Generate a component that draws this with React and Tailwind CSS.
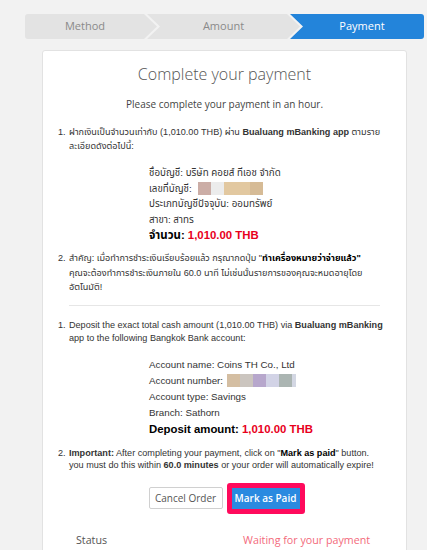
import React from "react";

const os = { fontFamily: '"Open Sans", "Noto Sans", sans-serif' };
const ar = { fontFamily: '"Liberation Sans", Arial, "Noto Sans Thai", sans-serif' };

function Blocks({ colors }) {
  return (
    <span className="inline-flex align-middle h-[13px]">
      {colors.map((c, i) => (
        <span key={i} className="inline-block h-[13px]" style={{ background: c[0], width: c[1] }} />
      ))}
    </span>
  );
}

export default function App() {
  return (
    <div className="min-h-[550px] bg-[#f2f2f2] pt-[14px]">
      {/* stepper */}
      <div className="ml-[25px] mr-[3px] flex h-[25px] rounded-[3px] overflow-hidden text-[11px]" style={os}>
        <div className="w-[132px] shrink-0 bg-[#e3e3e3] text-[#8a8a8a] flex items-center pr-[12px] [clip-path:polygon(0_0,119px_0,132px_50%,119px_100%,0_100%)]">
          <span className="flex-1 text-center">Method</span>
        </div>
        <div className="w-[153px] shrink-0 -ml-[10px] bg-[#e3e3e3] text-[#8a8a8a] flex items-center [clip-path:polygon(0_0,140px_0,153px_50%,140px_100%,0_100%,13px_50%)]">
          <span className="flex-1 text-center">Amount</span>
        </div>
        <div className="flex-1 -ml-[10px] bg-[#2384da] text-white flex items-center pl-[10px] [clip-path:polygon(0_0,100%_0,100%_100%,0_100%,13px_50%)]">
          <span className="flex-1 text-center">Payment</span>
        </div>
      </div>

      {/* card */}
      <div className="ml-[42px] mr-[20px] mt-[11px] bg-white border border-[#e2e2e2] rounded-[3px] min-h-[520px] pb-[20px]">
        <div className="pt-[10px] text-center text-[16px] leading-[26px] font-light text-[#555]" style={os}>
          Complete your payment
        </div>
        <div className="mt-[10px] text-center text-[10px] leading-[14px] text-[#444]" style={os}>
          Please complete your payment in an hour.
        </div>

        <div className="px-[26px] text-[9.1px] text-[#333]" style={ar}>
          {/* Thai section */}
          <div className="mt-[14px] flex leading-[14px]">
            <span className="w-[11px] -ml-[11px] shrink-0">1.</span>
            <span className="whitespace-nowrap">
              ฝากเงินเป็นจำนวนเท่ากับ (1,010.00 THB) ผ่าน <b>Bualuang mBanking app</b> ตามราย
              <br />
              ละเอียดดังต่อไปนี้:
            </span>
          </div>
          <div className="mt-[12px] pl-[80px] leading-[15.5px] text-[9.8px]">
            <div>ชื่อบัญชี: บริษัท คอยส์ ทีเอช จำกัด</div>
            <div className="flex items-center gap-[6px]">
              <span>เลขที่บัญชี:</span>
              <Blocks colors={[["#cbada6", "13px"], ["#ececec", "13px"], ["#e2c8a0", "26px"], ["#d6bb96", "13px"]]} />
            </div>
            <div>ประเภทบัญชีปัจจุบัน: ออมทรัพย์</div>
            <div>สาขา: สาทร</div>
            <div className="text-[11.4px] font-bold leading-[16px] text-black">
              จำนวน: <span className="text-[#e8001c]">1,010.00 THB</span>
            </div>
          </div>
          <div className="mt-[8px] flex leading-[14.5px]">
            <span className="w-[11px] -ml-[11px] shrink-0">2.</span>
            <span className="whitespace-nowrap">
              สำคัญ: เมื่อทำการชำระเงินเรียบร้อยแล้ว กรุณากดปุ่ม "<b className="text-black">ทำเครื่องหมายว่าจ่ายแล้ว"</b>
              <br />
              คุณจะต้องทำการชำระเงินภายใน 60.0 นาที ไม่เช่นนั้นรายการของคุณจะหมดอายุโดย
              <br />
              อัตโนมัติ!
            </span>
          </div>

          <div className="mt-[10px] border-t border-[#e6e6e6]" />

          {/* English section */}
          <div className="mt-[13px] flex leading-[13px]">
            <span className="w-[11px] -ml-[11px] shrink-0">1.</span>
            <span className="whitespace-nowrap">
              Deposit the exact total cash amount (1,010.00 THB) via <b>Bualuang mBanking</b>
              <br />
              app to the following Bangkok Bank account:
            </span>
          </div>
          <div className="mt-[12px] pl-[80px] leading-[16.3px] text-[9.8px]">
            <div>Account name: Coins TH Co., Ltd</div>
            <div className="flex items-center gap-[4px]">
              <span>Account number:</span>
              <Blocks colors={[["#d4bea2", "13px"], ["#cbc5bf", "13px"], ["#b7a7cc", "13px"], ["#d2d3e6", "13px"], ["#abb5b2", "13px"], ["#d3d7e3", "4px"]]} />
            </div>
            <div>Account type: Savings</div>
            <div>Branch: Sathorn</div>
            <div className="text-[11.4px] font-bold leading-[14px] text-black">
              Deposit amount: <span className="text-[#e8001c]">1,010.00 THB</span>
            </div>
          </div>
          <div className="mt-[11px] flex leading-[12.5px]">
            <span className="w-[11px] -ml-[11px] shrink-0">2.</span>
            <span className="whitespace-nowrap">
              <b>Important:</b> After completing your payment, click on "<b className="text-black">Mark as paid</b>" button.
              <br />
              you must do this within <b>60.0 minutes</b> or your order will automatically expire!
            </span>
          </div>
        </div>

        {/* buttons */}
        <div className="mt-[11px] flex items-center justify-center gap-[4px] pl-[4px]" style={os}>
          <button className="h-[22px] w-[74px] border border-[#d0d0d0] bg-white rounded-[2px] text-[10px] text-[#555]">
            Cancel Order
          </button>
          <div className="border-[4px] border-[#ff0a5c] rounded-[3px] p-[1px] bg-[#ff0a5c]">
            <button className="h-[21px] w-[68px] bg-[#2a8ae0] text-white text-[10px] font-semibold flex items-center justify-center">
              Mark as Paid
            </button>
          </div>
        </div>

        <div className="mt-[18px] flex justify-between pl-[33px] pr-[36px] text-[10.7px]" style={os}>
          <span className="text-[#555]">Status</span>
          <span className="text-[#f36a7b]">Waiting for your payment</span>
        </div>
      </div>
    </div>
  );
}
